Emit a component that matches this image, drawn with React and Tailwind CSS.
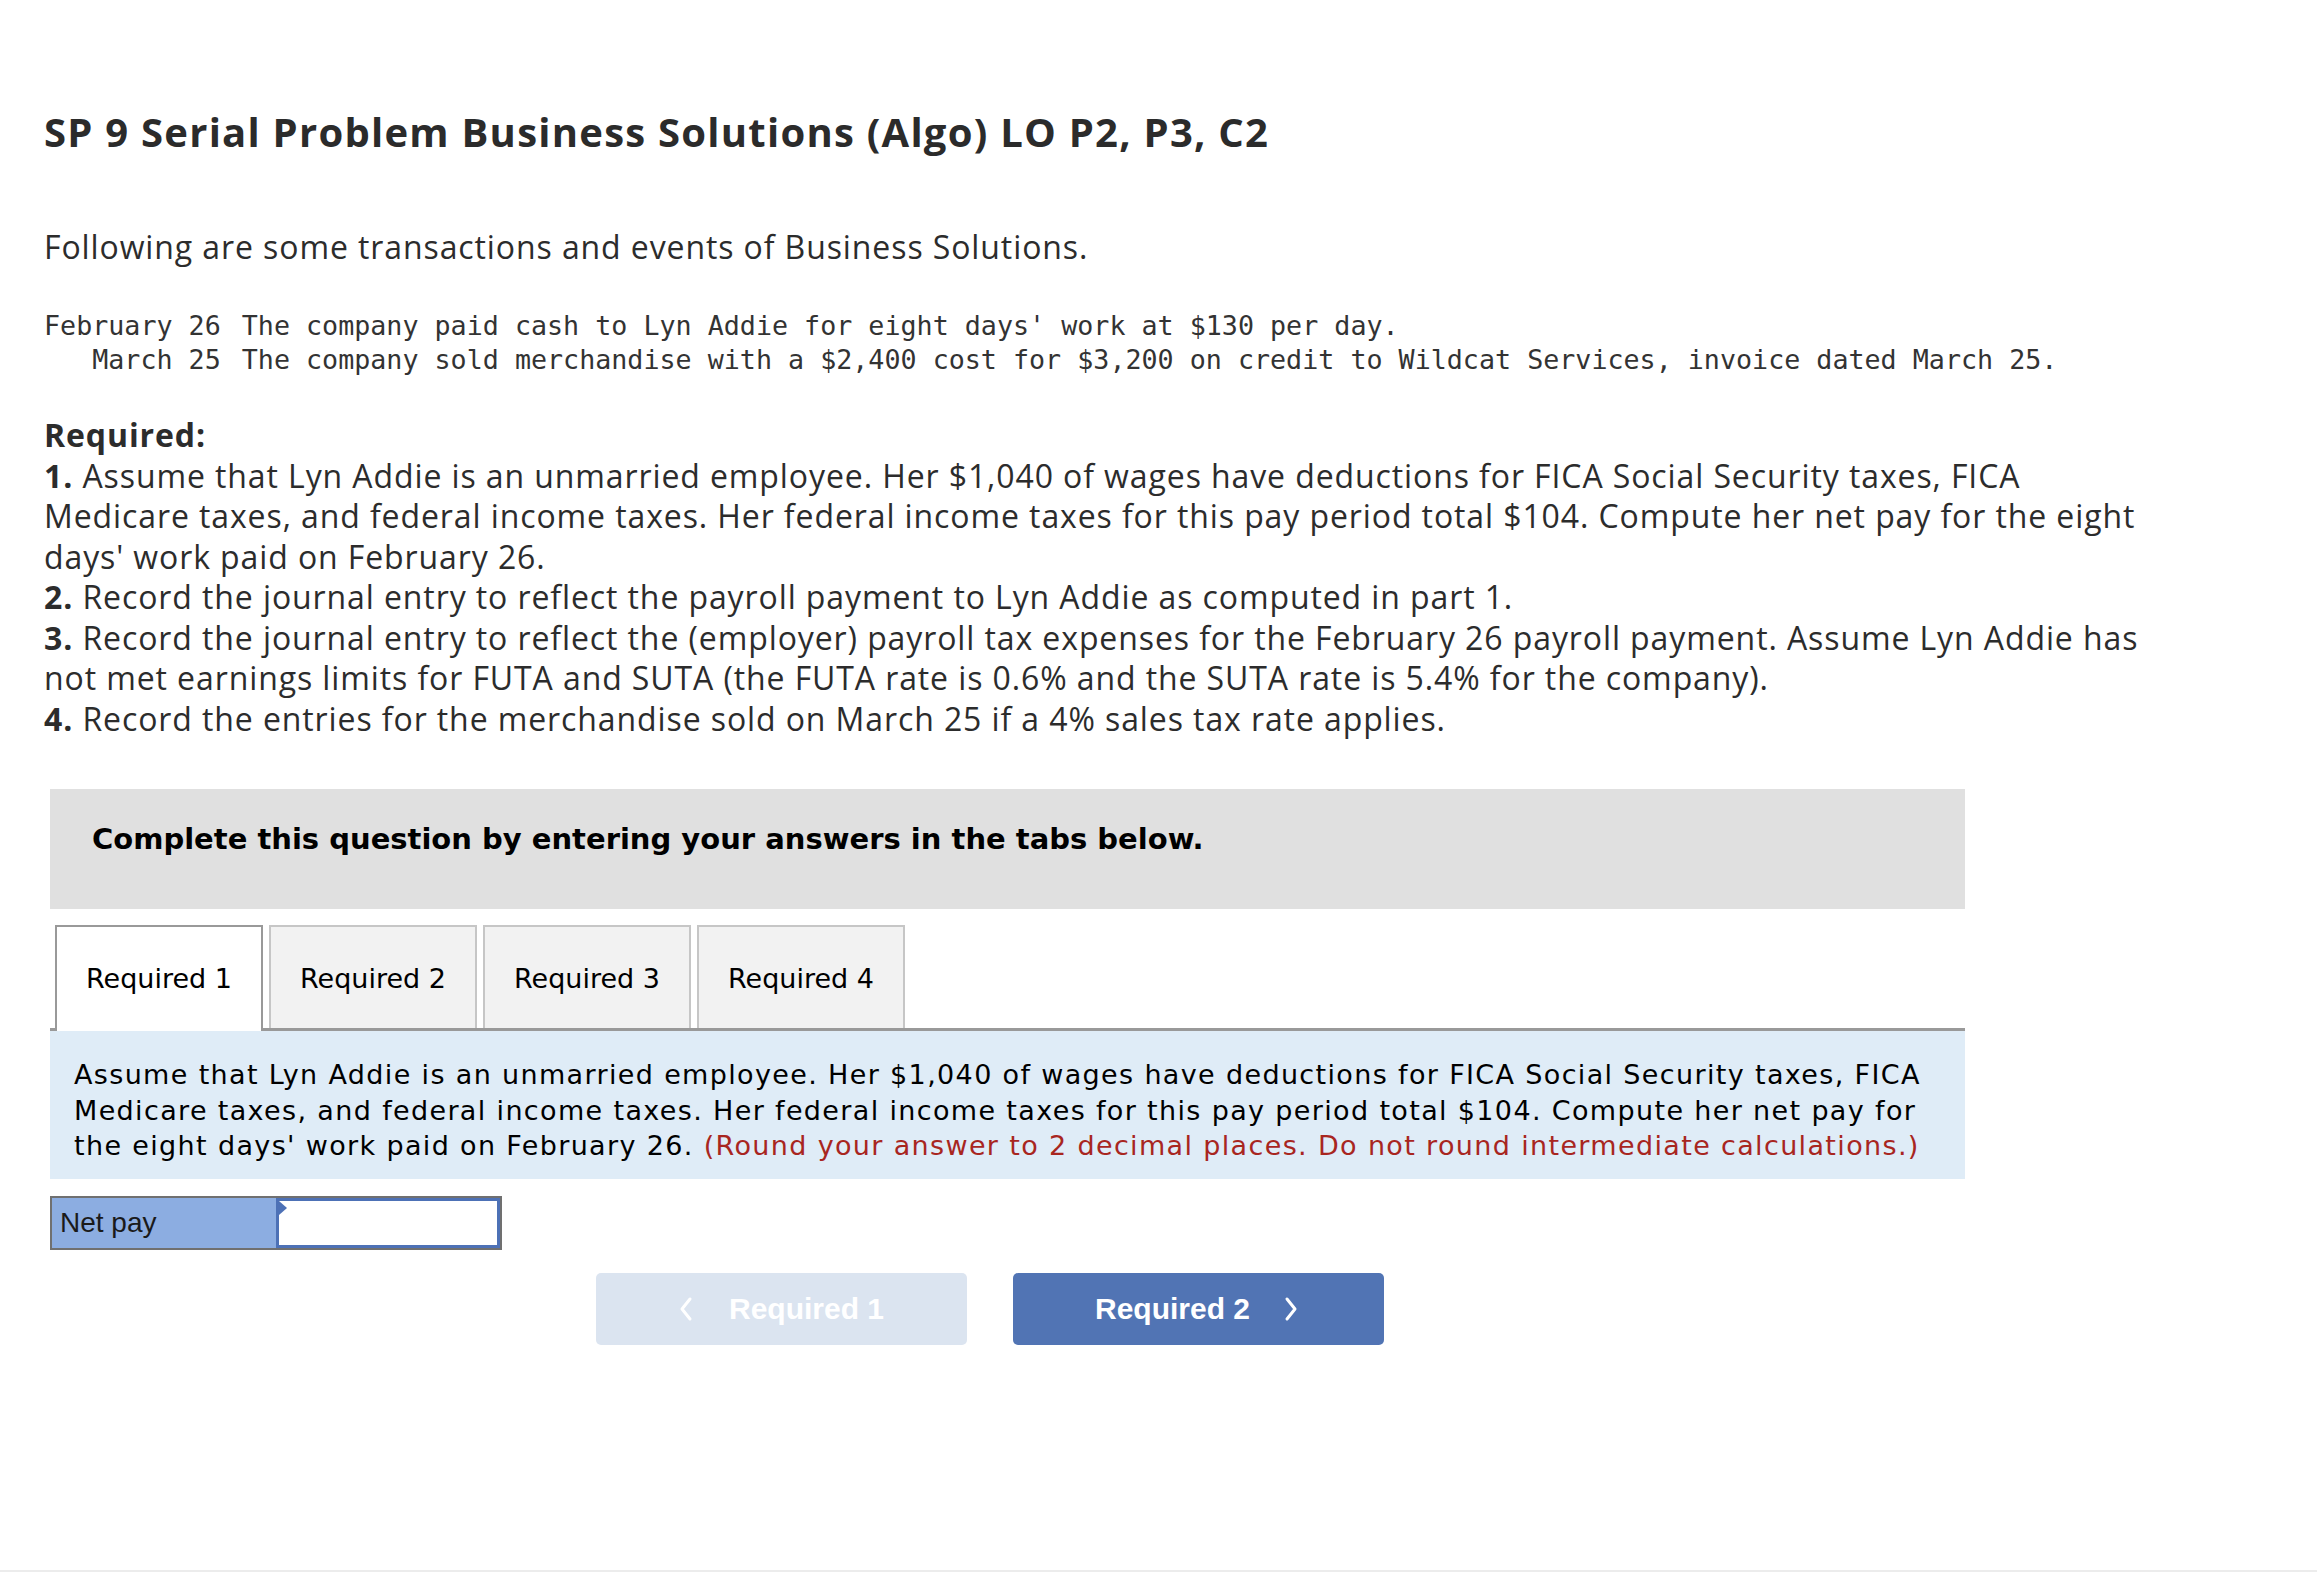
const proxima = { fontFamily: '"Open Sans", Lato, sans-serif' }

const tabs = ['Required 1', 'Required 2', 'Required 3', 'Required 4']

function Chevron({ dir }) {
    return (
        <svg width="14" height="26" viewBox="0 0 14 26" fill="none" stroke="currentColor" strokeWidth="3" strokeLinecap="round" strokeLinejoin="round">
            {dir === 'left' ? <polyline points="11,3 3,13 11,23" /> : <polyline points="3,3 11,13 3,23" />}
        </svg>
    )
}

export default function App() {
    return (
        <div className="h-[1577px] flex flex-col bg-white text-[#2c2c2c]">
            <div className="flex-1 pt-[108px] pl-[44px]">
                {/* heading */}
                <h1 className="text-[40px] tracking-[1.25px] leading-[48px] font-bold text-[#2b2b2b]" style={proxima}>
                    SP 9 Serial Problem Business Solutions (Algo) LO P2, P3, C2
                </h1>
                <p className="mt-[71px] text-[32px] tracking-[0.9px] leading-[40px]" style={proxima}>
                    Following are some transactions and events of Business Solutions.
                </p>

                {/* transactions */}
                <div className="mt-[42px] grid grid-cols-[auto_1fr] gap-x-[21px] font-['DejaVu_Sans_Mono',monospace] text-[26.7px] leading-[34px] text-[#333]">
                    <span className="text-right">February 26</span>
                    <span>The company paid cash to Lyn Addie for eight days' work at $130 per day.</span>
                    <span className="text-right">March 25</span>
                    <span>The company sold merchandise with a $2,400 cost for $3,200 on credit to Wildcat Services, invoice dated March 25.</span>
                </div>

                {/* required */}
                <div className="mt-[38px] text-[32px] tracking-[0.9px] leading-[40.5px] whitespace-nowrap" style={proxima}>
                    <p className="font-bold">Required:</p>
                    <p><b>1.</b> Assume that Lyn Addie is an unmarried employee. Her $1,040 of wages have deductions for FICA Social Security taxes, FICA<br />
                        Medicare taxes, and federal income taxes. Her federal income taxes for this pay period total $104. Compute her net pay for the eight<br />
                        days' work paid on February 26.</p>
                    <p><b>2.</b> Record the journal entry to reflect the payroll payment to Lyn Addie as computed in part 1.</p>
                    <p><b>3.</b> Record the journal entry to reflect the (employer) payroll tax expenses for the February 26 payroll payment. Assume Lyn Addie has<br />
                        not met earnings limits for FUTA and SUTA (the FUTA rate is 0.6% and the SUTA rate is 5.4% for the company).</p>
                    <p><b>4.</b> Record the entries for the merchandise sold on March 25 if a 4% sales tax rate applies.</p>
                </div>

                <div className="ml-[6px] w-[1915px] font-['DejaVu_Sans',Verdana,sans-serif]">
                    <div className="mt-[50px] h-[120px] bg-[#e0e0e0] pl-[42px] pt-[31px]">
                        <p className="text-[29px] leading-[38px] font-bold text-black">Complete this question by entering your answers in the tabs below.</p>
                    </div>

                    {/* tabs */}
                    <div className="mt-[16px] flex gap-[6px] pl-[5px] border-b-[3px] border-[#999]">
                        {tabs.map((t, i) => (
                            <div key={t}
                                className={i === 0
                                    ? 'w-[208px] h-[106px] -mb-[3px] flex items-center justify-center bg-white border-2 border-b-0 border-[#999] text-[27px] text-black'
                                    : 'w-[208px] h-[103px] pt-[3px] flex items-center justify-center bg-[#f2f2f2] border-2 border-b-0 border-[#c6c6c6] text-[27px] text-black'}>
                                {t}
                            </div>
                        ))}
                    </div>

                    <div className="bg-[#dfecf7] pl-[24px] pt-[26px] pb-[15px] text-[27px] tracking-[1.35px] leading-[35.5px] text-black whitespace-nowrap">
                        Assume that Lyn Addie is an unmarried employee. Her $1,040 of wages have deductions for FICA Social Security taxes, FICA<br />
                        Medicare taxes, and federal income taxes. Her federal income taxes for this pay period total $104. Compute her net pay for<br />
                        the eight days' work paid on February 26. <span className="text-[#a8261f]">(Round your answer to 2 decimal places. Do not round intermediate calculations.)</span>
                    </div>

                    {/* answer row */}
                    <div className="mt-[17px] w-[452px] h-[54px] flex border-2 border-[#707070] font-['Liberation_Sans',Arial,sans-serif]">
                        <div className="w-[224px] bg-[#8cade1] pl-[8px] flex items-center text-[28px] text-[#1a1a1a]">Net pay</div>
                        <div className="relative flex-1 bg-white border-[3px] border-[#4d71b6]">
                            <span className="absolute left-0 top-0 w-0 h-0 border-t-[7px] border-b-[7px] border-l-[8px] border-t-transparent border-b-transparent border-l-[#4d71b6]" />
                        </div>
                    </div>

                    {/* nav */}
                    <div className="mt-[23px] ml-[546px] flex gap-[46px] font-['Liberation_Sans',Arial,sans-serif] font-bold text-[30px] text-white">
                        <button className="w-[371px] h-[72px] rounded-[5px] bg-[#dbe4f0] flex items-center justify-center gap-[36px]">
                            <Chevron dir="left" />
                            <span>Required 1</span>
                        </button>
                        <button className="w-[371px] h-[72px] rounded-[5px] bg-[#5174b4] flex items-center justify-center gap-[34px] pr-[4px]">
                            <span>Required 2</span>
                            <Chevron dir="right" />
                        </button>
                    </div>
                </div>
            </div>
            <div className="h-[7px] border-t-2 border-[#ececec]" />
        </div>
    )
}
